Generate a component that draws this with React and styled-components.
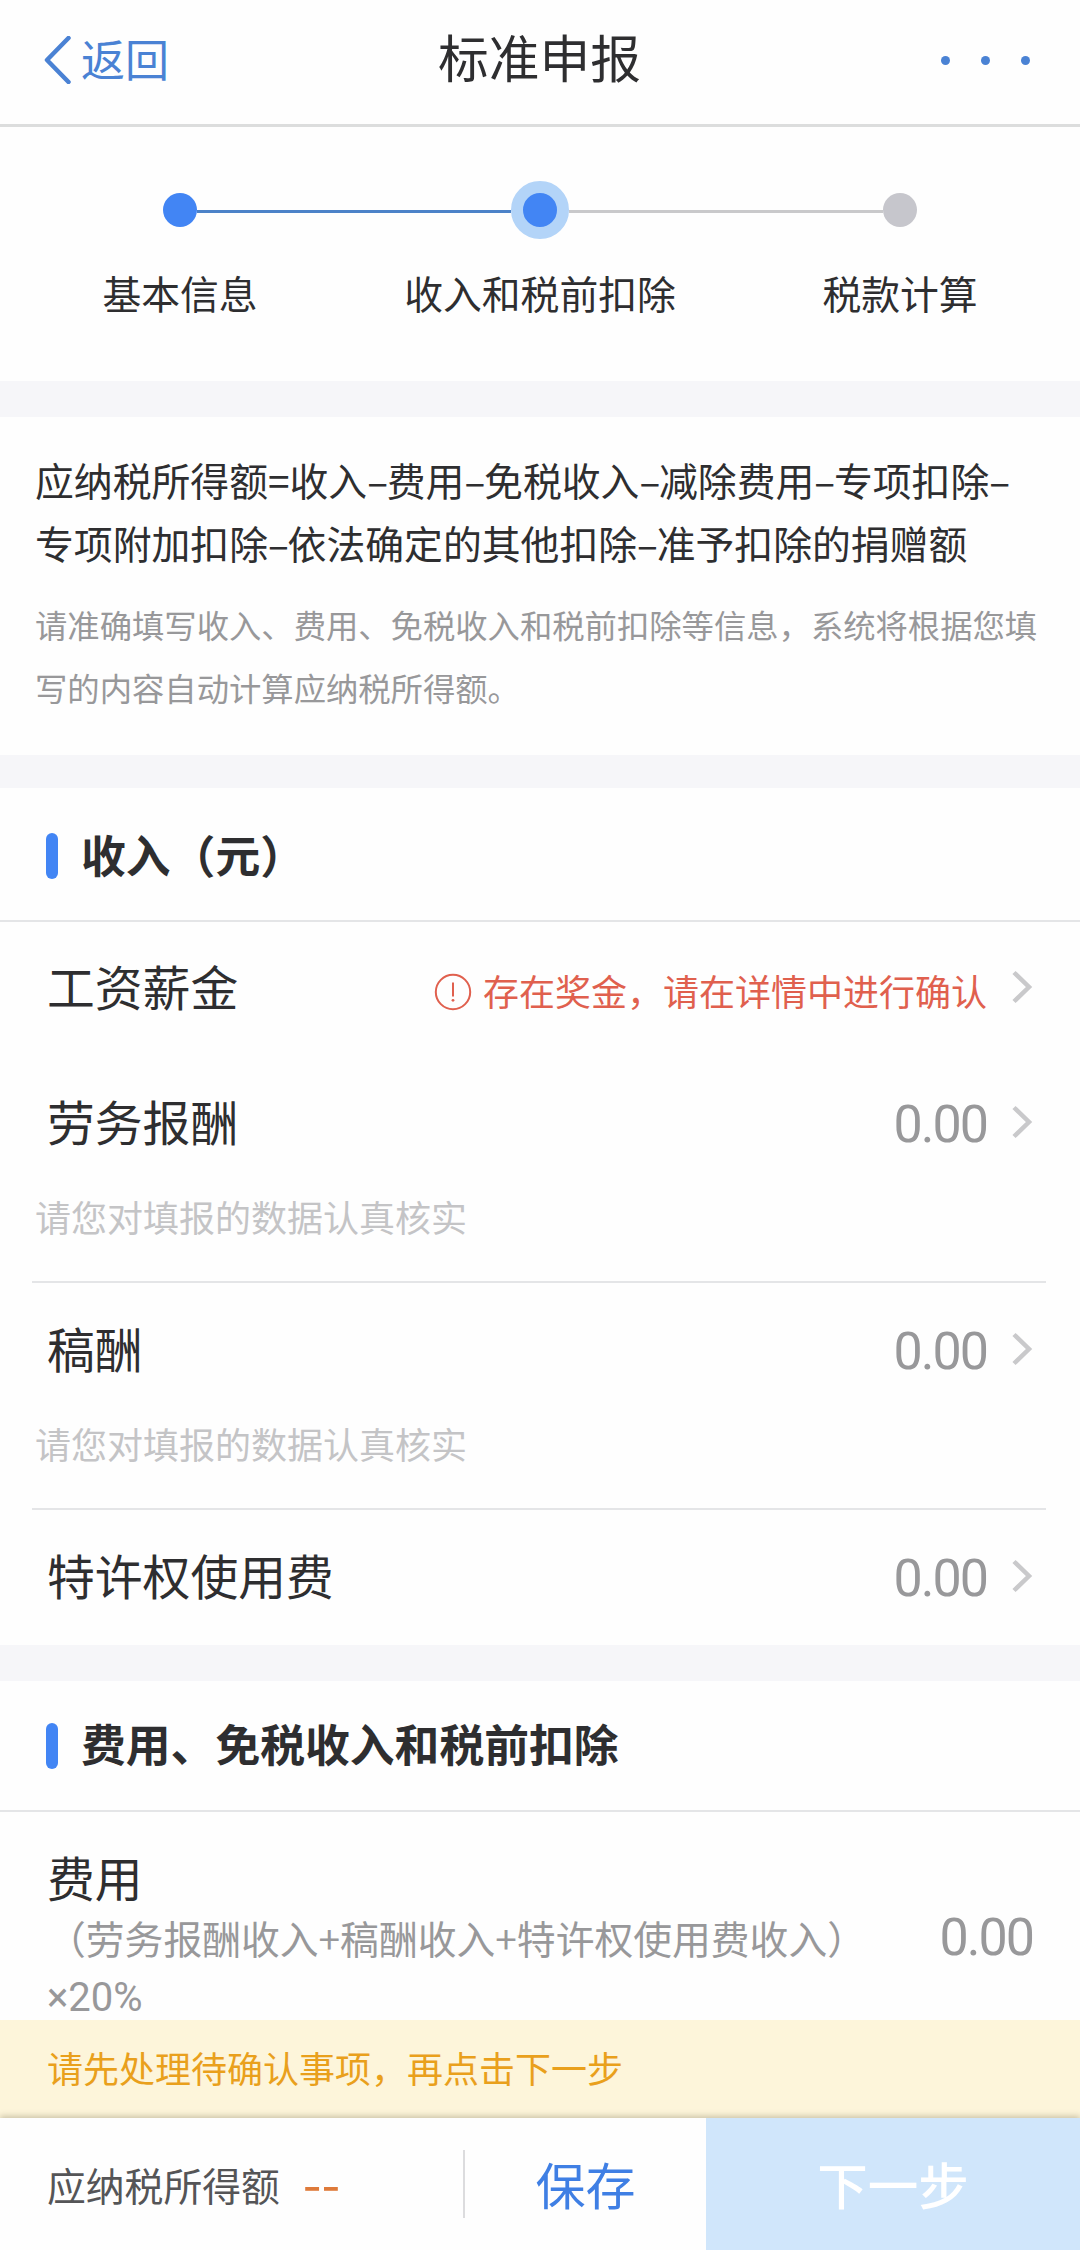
import React from "react";
import styled, { createGlobalStyle, ThemeProvider } from "styled-components";

const theme = {
  colors: {
    primary: "#4285f4",
    link: "#4a82d4",
    halo: "#b3d4f8",
    text: "#2e2e30",
    muted: "#98989a",
    hint: "#c4c4c6",
    line: "#e4e5e7",
    idle: "#c6c6cc",
    band: "#f6f6f9",
    danger: "#e0604e",
    warning: "#e9a01c",
    warningBg: "#fdf5da",
    disabled: "#d0e6fb",
    page: "#fefefe",
  },
};

const GlobalStyle = createGlobalStyle`
  * {
    box-sizing: border-box;
  }

  body {
    margin: 0;
    background: ${theme.colors.page};
    font-family: "Noto Sans CJK SC", "Noto Sans", sans-serif;
    color: ${theme.colors.text};
  }

  button {
    border: none;
    background: none;
    padding: 0;
    font-family: inherit;
  }
`;

const Page = styled.div`
  width: 1080px;
  height: 2250px;
  display: flex;
  flex-direction: column;
  overflow: hidden;
  white-space: nowrap;
`;

const Header = styled.header`
  flex: none;
  height: 127px;
  padding: 0 50px 8px 43px;
  display: grid;
  grid-template-columns: 1fr auto 1fr;
  align-items: center;
  border-bottom: 3px solid #dcdddd;
`;

const BackButton = styled.button`
  display: flex;
  align-items: center;
  gap: 9px;
  color: ${({ theme }) => theme.colors.link};
  font-size: 44px;
  line-height: 58px;

  svg {
    margin-top: 4px;
  }
`;

const HeaderTitle = styled.h1`
  margin: 0 0 5px 6px;
  font-size: 50.7px;
  font-weight: 400;
  line-height: 64px;
`;

const MoreButton = styled.button`
  justify-self: end;
  display: flex;
  gap: 31px;
  padding-top: 5px;
`;

const MoreDot = styled.span`
  width: 9px;
  height: 9px;
  border-radius: 50%;
  background: ${({ theme }) => theme.colors.link};
`;

const Steps = styled.section`
  flex: none;
  height: 254px;
  padding-top: 54px;
  display: grid;
  grid-template-columns: repeat(3, 360px);
  grid-template-rows: 58px 74px;
  row-gap: 17px;
`;

const StepTrack = styled.div`
  display: grid;
  grid-template-columns: 1fr auto 1fr;
  align-items: center;
`;

const StepLine = styled.span`
  height: 3px;
  margin-top: 3px;
  background: ${({ $state }) =>
    $state === "done"
      ? "#4c82c8"
      : $state === "todo"
        ? "#c9c9cb"
        : "transparent"};
`;

const StepDot = styled.span`
  width: ${({ $current }) => ($current ? 58 : 34)}px;
  height: ${({ $current }) => ($current ? 58 : 34)}px;
  border: ${({ $current }) => ($current ? 12 : 0)}px solid
    ${({ theme }) => theme.colors.halo};
  border-radius: 50%;
  background: ${({ theme, $idle }) =>
    $idle ? theme.colors.idle : theme.colors.primary};
`;

const StepLabel = styled.span`
  text-align: center;
  font-size: 38.8px;
  line-height: 72px;
`;

const Band = styled.div`
  flex: none;
  height: ${({ $height }) => $height}px;
  background: ${({ theme }) => theme.colors.band};
`;

const Formula = styled.section`
  flex: none;
  height: 338px;
  padding: 31px 35px 0;
`;

const FormulaText = styled.p`
  margin: 0;
  font-size: 38.85px;
  line-height: 63px;
`;

const Dash = styled.span`
  display: inline-block;
  width: 19.6px;
  text-align: center;
`;

const FormulaNote = styled.p`
  margin: 18px 0 0;
  font-size: 32.35px;
  line-height: 63px;
  color: ${({ theme }) => theme.colors.muted};
`;

const SectionHead = styled.div`
  flex: none;
  height: ${({ $height }) => $height}px;
  padding: ${({ $drop = 0 }) => $drop}px 0 0 46px;
  display: flex;
  align-items: center;
  gap: 23px;
  border-bottom: 2px solid ${({ theme }) => theme.colors.line};
`;

const SectionMark = styled.span`
  width: 12px;
  height: 46px;
  border-radius: 6px;
  background: ${({ theme }) => theme.colors.primary};
`;

const SectionTitle = styled.h2`
  margin: 0 0 5px;
  font-size: 44.8px;
  font-weight: 700;
  line-height: 60px;
`;

const Row = styled.div`
  flex: none;
  height: ${({ $height = 135 }) => $height}px;
  padding: 0 47px;
  display: flex;
  align-items: center;
`;

const RowLabel = styled.span`
  flex: 1;
  padding-bottom: 6px;
  font-size: 47.8px;
  line-height: 64px;
`;

const Amount = styled.span`
  padding-top: ${({ $drop = 2 }) => $drop}px;
  font-family: Roboto, sans-serif;
  font-size: 52px;
  line-height: 64px;
  letter-spacing: -2px;
  color: ${({ theme }) => theme.colors.muted};
`;

const Alert = styled.span`
  display: flex;
  align-items: center;
  gap: 11px;
  padding-top: 2px;
  font-size: 36px;
  line-height: 48px;
  color: ${({ theme }) => theme.colors.danger};

  svg {
    margin-top: 4px;
  }
`;

const RowArrow = styled.svg`
  margin: 0 0 4px 24px;
`;

const RowHint = styled.div`
  flex: none;
  height: 92px;
  margin: 0 34px 0 32px;
  padding: 0 3px;
  border-bottom: 2px solid ${({ theme }) => theme.colors.line};
  font-size: 36px;
  line-height: 51px;
  color: ${({ theme }) => theme.colors.hint};
`;

const CostRow = styled.div`
  flex: none;
  height: 208px;
  padding: 38px 47px 0;
  display: flex;
  align-items: center;
  justify-content: space-between;
`;

const CostName = styled.div`
  font-size: 47.8px;
  line-height: 64px;
`;

const CostNote = styled.div`
  font-size: 38.8px;
  line-height: 57px;
  color: ${({ theme }) => theme.colors.muted};
`;

const CostRate = styled.span`
  font-family: Roboto, sans-serif;
  font-size: 40px;
`;

const Notice = styled.div`
  flex: none;
  height: 98px;
  padding: 0 47px;
  font-size: 36px;
  line-height: 94px;
  color: ${({ theme }) => theme.colors.warning};
  background: ${({ theme }) => theme.colors.warningBg};
`;

const Footer = styled.footer`
  flex: 1;
  display: flex;
  align-items: stretch;
  box-shadow: 0 -2px 6px rgba(90, 80, 50, 0.3);
`;

const Total = styled.div`
  width: 463px;
  padding-left: 47px;
  font-size: 38.8px;
  line-height: 132px;
  color: #555557;
`;

const TotalValue = styled.span`
  margin-left: 23px;
  font-size: 54px;
  line-height: 0;
  vertical-align: -3px;
  color: #de7a3a;
`;

const Divider = styled.span`
  align-self: center;
  width: 2px;
  height: 68px;
  background: #dcdcde;
`;

const SaveButton = styled.button`
  flex: 1;
  padding-bottom: 3px;
  font-size: 50px;
  color: #3f7fe4;
`;

const NextButton = styled.button`
  width: 374px;
  padding-bottom: 3px;
  font-size: 50.5px;
  font-weight: 500;
  color: #fff;
  background: ${({ theme }) => theme.colors.disabled};
`;

const steps = [
  { label: "基本信息", before: "none", after: "done" },
  { label: "收入和税前扣除", before: "done", after: "todo", current: true },
  { label: "税款计算", before: "todo", after: "none", idle: true },
];

const incomes = [
  { label: "工资薪金", alert: "存在奖金，请在详情中进行确认", height: 134 },
  { label: "劳务报酬", amount: "0.00", hint: "请您对填报的数据认真核实" },
  { label: "稿酬", amount: "0.00", hint: "请您对填报的数据认真核实" },
  { label: "特许权使用费", amount: "0.00" },
];

const formulaLines = [
  "应纳税所得额=收入–费用–免税收入–减除费用–专项扣除–",
  "专项附加扣除–依法确定的其他扣除–准予扣除的捐赠额",
];

const Arrow = () => (
  <RowArrow width="22" height="34" viewBox="0 0 22 34" fill="none">
    <path d="M3 2.5L18 17L3 31.5" stroke="#c9c9cb" strokeWidth="4.5" />
  </RowArrow>
);

const AlertIcon = () => (
  <svg width="38" height="38" viewBox="0 0 38 38" fill="none">
    <circle cx="19" cy="19" r="17.2" stroke="#e0604e" strokeWidth="2" />
    <path d="M19 9.5V23.5" stroke="#e0604e" strokeWidth="2" />
    <circle cx="19" cy="27.3" r="1.4" fill="#e0604e" />
  </svg>
);

const FormulaLine = ({ text }) => (
  <>
    {text.split("–").map((part, i) => (
      <React.Fragment key={i}>
        {i > 0 && <Dash>–</Dash>}
        {part}
      </React.Fragment>
    ))}
  </>
);

const App = () => {
  return (
    <ThemeProvider theme={theme}>
      <GlobalStyle />
      <Page>
        <Header>
          <BackButton>
            <svg width="29" height="48" viewBox="0 0 29 48" fill="none">
              <path
                d="M25.5 2L4 24L25.5 46"
                stroke="#4a82d4"
                strokeWidth="4.5"
                strokeLinecap="round"
                strokeLinejoin="round"
              />
            </svg>
            返回
          </BackButton>
          <HeaderTitle>标准申报</HeaderTitle>
          <MoreButton>
            <MoreDot />
            <MoreDot />
            <MoreDot />
          </MoreButton>
        </Header>

        <Steps>
          {steps.map((step) => (
            <StepTrack key={step.label}>
              <StepLine $state={step.before} />
              <StepDot $current={step.current} $idle={step.idle} />
              <StepLine $state={step.after} />
            </StepTrack>
          ))}
          {steps.map((step) => (
            <StepLabel key={step.label}>{step.label}</StepLabel>
          ))}
        </Steps>

        <Band $height={36} />

        <Formula>
          <FormulaText>
            <FormulaLine text={formulaLines[0]} />
            <br />
            <FormulaLine text={formulaLines[1]} />
          </FormulaText>
          <FormulaNote>
            请准确填写收入、费用、免税收入和税前扣除等信息，系统将根据您填
            <br />
            写的内容自动计算应纳税所得额。
          </FormulaNote>
        </Formula>

        <Band $height={33} />

        <SectionHead $height={134} $drop={4}>
          <SectionMark />
          <SectionTitle>收入（元）</SectionTitle>
        </SectionHead>
        {incomes.map((item) => (
          <React.Fragment key={item.label}>
            <Row $height={item.height}>
              <RowLabel>{item.label}</RowLabel>
              {item.alert && (
                <Alert>
                  <AlertIcon />
                  {item.alert}
                </Alert>
              )}
              {item.amount && <Amount>{item.amount}</Amount>}
              <Arrow />
            </Row>
            {item.hint && <RowHint>{item.hint}</RowHint>}
          </React.Fragment>
        ))}

        <Band $height={36} />

        <SectionHead $height={131}>
          <SectionMark />
          <SectionTitle>费用、免税收入和税前扣除</SectionTitle>
        </SectionHead>
        <CostRow>
          <div>
            <CostName>费用</CostName>
            <CostNote>
              （劳务报酬收入+稿酬收入+特许权使用费收入）
              <br />
              <CostRate>×20%</CostRate>
            </CostNote>
          </div>
          <Amount $drop={5}>0.00</Amount>
        </CostRow>

        <Notice>请先处理待确认事项，再点击下一步</Notice>

        <Footer>
          <Total>
            应纳税所得额
            <TotalValue>--</TotalValue>
          </Total>
          <Divider />
          <SaveButton>保存</SaveButton>
          <NextButton>下一步</NextButton>
        </Footer>
      </Page>
    </ThemeProvider>
  );
};

export default App;
